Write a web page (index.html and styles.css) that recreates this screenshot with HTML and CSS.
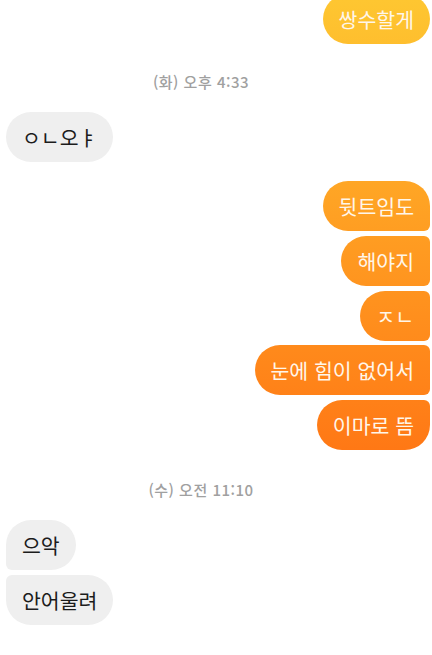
FILE: index.html
```html
<!DOCTYPE html>
<html lang="ko">
<head>
<meta charset="utf-8">
<link rel="stylesheet" href="styles.css">
</head>
<body>
<div class="chat">
  <div class="group out first-group">
    <div class="bubble out single">쌍수할게</div>
  </div>
  <div class="stamp">(화) 오후 4:33</div>
  <div class="group in">
    <div class="bubble in single">ㅇㄴ오ㅑ</div>
  </div>
  <div class="group out">
    <div class="bubble out top">뒷트임도</div>
    <div class="bubble out mid">해야지</div>
    <div class="bubble out mid">ㅈㄴ</div>
    <div class="bubble out mid">눈에 힘이 없어서</div>
    <div class="bubble out bottom">이마로 뜸</div>
  </div>
  <div class="stamp stamp2">(수) 오전 11:10</div>
  <div class="group in">
    <div class="bubble in top">으악</div>
    <div class="bubble in bottom">안어울려</div>
  </div>
</div>
</body>
</html>
```

FILE: styles.css
```css
html, body {
  margin: 0;
  padding: 0;
  background: #ffffff;
}
body {
  width: 432px;
  height: 655px;
  overflow: hidden;
  font-family: "Noto Sans CJK KR", "Noto Sans", sans-serif;
}
.chat {
  display: flex;
  flex-direction: column;
}
.group {
  display: flex;
  flex-direction: column;
  gap: 4.8px;
}
.group.out {
  align-items: flex-end;
  padding-right: 2px;
  margin-top: 19px;
}
.group.in {
  align-items: flex-start;
  padding-left: 6px;
  margin-top: 20px;
}
.group.first-group {
  margin-top: -6px;
}
.bubble {
  box-sizing: border-box;
  height: 50px;
  padding: 0 16px;
  font-size: 20.5px;
  line-height: 50px;
  white-space: nowrap;
  border-radius: 25px;
}
.bubble.out {
  color: #fff6ea;
  background: linear-gradient(to bottom, #fec631 0px, #ffa324 200px, #ff7815 450px);
  background-attachment: fixed;
}
.bubble.in {
  color: #1c1c1c;
  background: #efefef;
}
.bubble.out.top { border-radius: 25px 25px 6px 25px; }
.bubble.out.mid { border-radius: 25px 6px 6px 25px; }
.bubble.out.bottom { border-radius: 25px 6px 25px 25px; }
.bubble.in.top { border-radius: 25px 25px 25px 6px; }
.bubble.in.bottom { border-radius: 6px 25px 25px 25px; }
.stamp {
  margin-top: 28px;
  padding-right: 30px;
  text-align: center;
  font-size: 15px;
  font-weight: 500;
  letter-spacing: 0.5px;
  line-height: 20px;
  color: #a0a0a0;
  font-family: "Noto Sans CJK KR", sans-serif;
}
.stamp2 {
  margin-top: 30px;
}
```
